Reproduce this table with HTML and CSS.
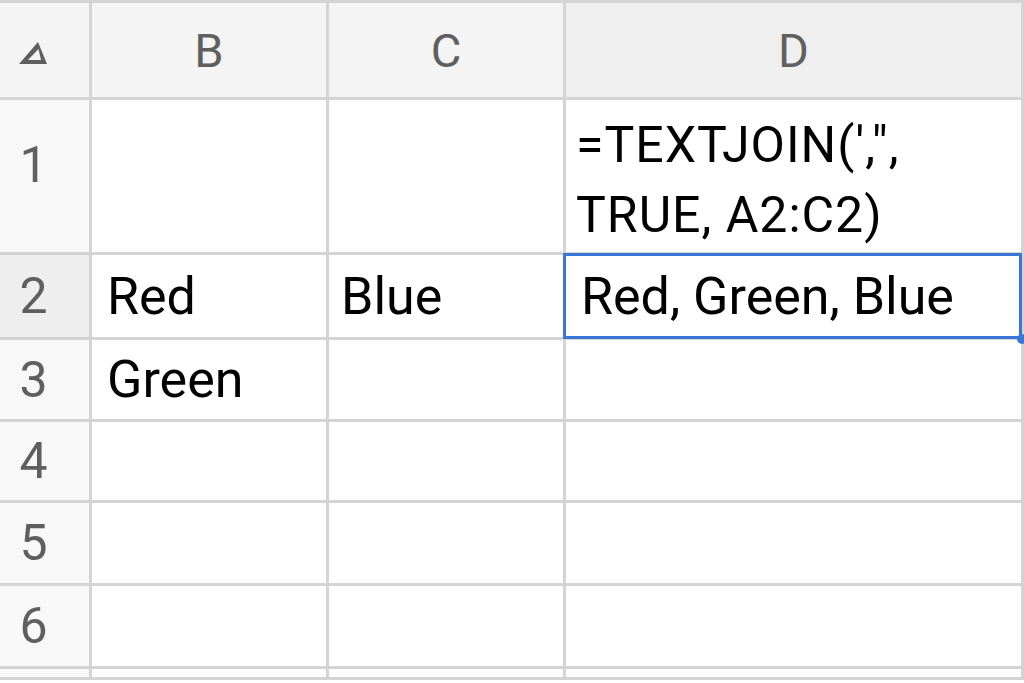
FILE: index.html
```html
<!DOCTYPE html>
<html lang="en">
<head>
<meta charset="utf-8">
<title>Sheet</title>
<link rel="stylesheet" href="styles.css">
</head>
<body>
<div class="sheet">
  <div class="corner">
    <svg class="corner-icon" width="30" height="24" viewBox="0 0 30 24">
      <path d="M20 1 L1 23 L29 23 Z M20.5 8 L10 19 L23 19 Z" fill="#5f5f5f" fill-rule="evenodd"/>
    </svg>
  </div>
  <div class="colhead">B</div>
  <div class="colhead">C</div>
  <div class="colhead colhead-active">D</div>

  <div class="rowhead rowhead-first">1</div>
  <div class="cell"></div>
  <div class="cell"></div>
  <div class="cell cell-formula">=TEXTJOIN(',",<br>TRUE, A2:C2)</div>

  <div class="rowhead rowhead-active">2</div>
  <div class="cell">Red</div>
  <div class="cell cell-tight">Blue</div>
  <div class="cell cell-selected">Red, Green, Blue<span class="handle"></span></div>

  <div class="rowhead">3</div>
  <div class="cell">Green</div>
  <div class="cell"></div>
  <div class="cell"></div>

  <div class="rowhead">4</div>
  <div class="cell"></div>
  <div class="cell"></div>
  <div class="cell"></div>

  <div class="rowhead">5</div>
  <div class="cell"></div>
  <div class="cell"></div>
  <div class="cell"></div>

  <div class="rowhead">6</div>
  <div class="cell"></div>
  <div class="cell"></div>
  <div class="cell"></div>

  <div class="rowhead"></div>
  <div class="cell"></div>
  <div class="cell"></div>
  <div class="cell"></div>
</div>
</body>
</html>
```

FILE: styles.css
```css
html, body {
  margin: 0;
  padding: 0;
  background: #ffffff;
}

body {
  width: 1024px;
  height: 683px;
  overflow: hidden;
  font-family: Roboto, "Liberation Sans", sans-serif;
}

.sheet {
  display: grid;
  grid-template-columns: 89px 234px 234px 1fr;
  grid-template-rows: 94px 152px 82px 79px 78px 80px 80px 8px;
  gap: 3px;
  padding: 3px 3px 3px 0;
  background: #d4d4d4;
  width: 1024px;
  box-sizing: border-box;
}

.corner,
.colhead {
  background: #f4f4f4;
  display: flex;
  align-items: center;
  justify-content: center;
}

.corner {
  justify-content: flex-start;
  padding-left: 18px;
}

.corner-icon {
  display: block;
  margin-top: 6px;
}

.colhead {
  color: #5f5f5f;
  font-size: 47px;
}

.colhead-active {
  background: #efefef;
}

.rowhead {
  background: #f8f8f8;
  color: #5f5f5f;
  font-size: 50px;
  display: flex;
  align-items: center;
  justify-content: center;
  padding-right: 22px;
}

.rowhead-first {
  padding-bottom: 22px;
}

.rowhead-active {
  background: #eeeeee;
}

.cell {
  background: #ffffff;
  color: #000000;
  font-size: 52px;
  display: flex;
  align-items: center;
  padding-left: 15px;
  white-space: nowrap;
}

.cell-tight {
  padding-left: 12px;
}

.cell-formula {
  font-size: 50px;
  line-height: 70px;
  letter-spacing: 1px;
  padding-left: 10px;
  padding-top: 8px;
  white-space: normal;
}

.cell-selected {
  position: relative;
}

.cell-selected::after {
  content: "";
  position: absolute;
  top: -2px;
  left: -3px;
  right: -1px;
  bottom: -2px;
  border: 3px solid #3a76d6;
  pointer-events: none;
}

.handle {
  position: absolute;
  right: -6px;
  bottom: -7px;
  width: 10px;
  height: 10px;
  border-radius: 50%;
  background: #3a76d6;
  z-index: 1;
}
```
